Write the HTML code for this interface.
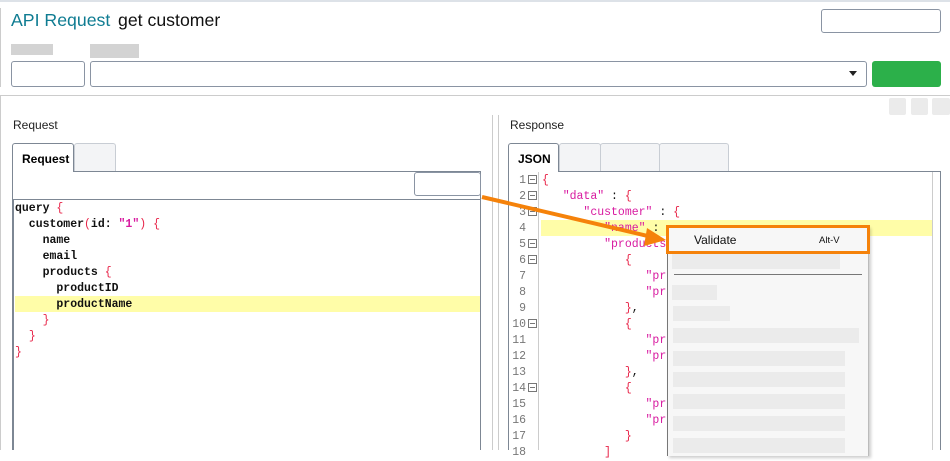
<!DOCTYPE html><html><head><style>
*{margin:0;padding:0;box-sizing:border-box}
body{width:950px;height:450px;overflow:hidden;background:#fff;font-family:"Liberation Sans",sans-serif;position:relative}
.a{position:absolute}
.code{font-family:"Liberation Mono",monospace;font-size:11.5px;font-weight:bold;line-height:16px;white-space:pre;color:#111}
.r{color:#e8264a;font-weight:normal}.p{color:#d81aa0}
.ln{font-family:"Liberation Mono",monospace;font-size:11.5px;color:#777;line-height:16px}
.fb{position:absolute;width:9px;height:9px;border:1px solid #777;left:9px}
.fb:after{content:"";position:absolute;left:1px;top:3px;width:5px;height:1px;background:#777}
.bar{position:absolute;background:#ebebeb;height:15px}
</style></head><body>
<div class="a" style="left:0;top:0;width:950px;height:2px;background:#dde2e8"></div>
<div class="a" style="left:0;top:8px;width:1px;height:79px;background:#ccc"></div>
<div class="a" style="left:11px;top:10px;font-size:17.7px;color:#0f7c92">API Request</div>
<div class="a" style="left:118px;top:10px;font-size:17.7px;color:#111">get customer</div>
<div class="a" style="left:821px;top:9px;width:120px;height:24px;border:1px solid #8a94a3;border-radius:3px"></div>
<div class="a" style="left:11px;top:44px;width:42px;height:11px;background:#d3d3d3"></div>
<div class="a" style="left:90px;top:44px;width:49px;height:14px;background:#d3d3d3"></div>
<div class="a" style="left:11px;top:61px;width:74px;height:26px;border:1px solid #8a94a3;border-radius:3px"></div>
<div class="a" style="left:90px;top:61px;width:777px;height:26px;border:1px solid #8a94a3;border-radius:3px"></div>
<div class="a" style="left:849px;top:71px;border-left:4px solid transparent;border-right:4px solid transparent;border-top:5px solid #222"></div>
<div class="a" style="left:872px;top:61px;width:69px;height:26px;background:#2cb04a;border-radius:3px"></div>
<div class="a" style="left:0;top:95px;width:950px;height:1px;background:#ccc"></div>
<div class="a" style="left:0;top:96px;width:1px;height:354px;background:#ccc"></div>
<div class="a" style="left:889px;top:98px;width:17px;height:17px;background:#ebebeb;border-radius:2px"></div>
<div class="a" style="left:911px;top:98px;width:17px;height:17px;background:#ebebeb;border-radius:2px"></div>
<div class="a" style="left:932px;top:98px;width:18px;height:17px;background:#ebebeb;border-radius:2px"></div>
<!-- left pane -->
<div class="a" style="left:13px;top:118px;font-size:12px;color:#222">Request</div>
<div class="a" style="left:12px;top:171px;width:469px;height:279px;border:1px solid #7d8794;border-bottom:none"></div>
<div class="a" style="left:12px;top:143px;width:62px;height:29px;border:1px solid #7d8794;border-bottom:none;background:#fff;border-radius:3px 3px 0 0;font-size:12px;font-weight:bold;padding:8px 0 0 9px">Request</div>
<div class="a" style="left:74px;top:143px;width:42px;height:28px;border:1px solid #c8cdd4;border-bottom:none;background:#f3f4f6;border-radius:3px 3px 0 0"></div>
<div class="a" style="left:414px;top:172px;width:67px;height:24px;border:1px solid #8a94a3;border-radius:3px"></div>
<div class="a" style="left:12px;top:199px;width:469px;height:1px;background:#7d8794"></div>
<div class="a" style="left:12px;top:200px;width:2px;height:250px;background:#7d8794"></div>
<div class="a" style="left:15px;top:296px;width:465px;height:16px;background:#fffda8"></div>
<div class="a code" style="left:15px;top:201px">query <span class="r">{</span>
  customer<span class="r">(</span>id: <span class="p">"1"</span><span class="r">)</span> <span class="r">{</span>
    name
    email
    products <span class="r">{</span>
      productID
      productName
    <span class="r">}</span>
  <span class="r">}</span>
<span class="r">}</span></div>
<div class="a" style="left:492px;top:115px;width:1px;height:335px;background:#ccc"></div>
<div class="a" style="left:498px;top:115px;width:1px;height:335px;background:#ccc"></div>
<!-- right pane -->
<div class="a" style="left:510px;top:118px;font-size:12px;color:#222">Response</div>
<div class="a" style="left:508px;top:171px;width:433px;height:279px;border:1px solid #7d8794;border-bottom:none"></div>
<div class="a" style="left:508px;top:143px;width:51px;height:29px;border:1px solid #7d8794;border-bottom:none;background:#fff;border-radius:3px 3px 0 0;font-size:12px;font-weight:bold;padding:8px 0 0 9px">JSON</div>
<div class="a" style="left:559px;top:143px;width:42px;height:28px;border:1px solid #c8cdd4;border-bottom:none;background:#f3f4f6;border-radius:3px 3px 0 0"></div>
<div class="a" style="left:600px;top:143px;width:60px;height:28px;border:1px solid #c8cdd4;border-bottom:none;background:#f3f4f6;border-radius:3px 3px 0 0"></div>
<div class="a" style="left:659px;top:143px;width:70px;height:28px;border:1px solid #c8cdd4;border-bottom:none;background:#f3f4f6;border-radius:3px 3px 0 0"></div>
<div class="a" style="left:538px;top:172px;width:1px;height:278px;background:#ccc"></div>
<div class="a" style="left:932px;top:172px;width:1px;height:278px;background:#ccc"></div>
<div class="a" style="left:541px;top:220px;width:391px;height:16px;background:#fffda8"></div>
<div class="a ln" style="left:510px;top:173px;width:16px;text-align:right">1<br>2<br>3<br>4<br>5<br>6<br>7<br>8<br>9<br>10<br>11<br>12<br>13<br>14<br>15<br>16<br>17<br>18</div>
<div class="a" style="left:519px;top:172px">
<div class="fb" style="top:3px"></div><div class="fb" style="top:19px"></div><div class="fb" style="top:35px"></div><div class="fb" style="top:67px"></div><div class="fb" style="top:83px"></div><div class="fb" style="top:147px"></div><div class="fb" style="top:211px"></div></div>
<div class="a code" style="left:542px;top:173px;font-weight:normal"><span class="r">{</span>
   <span class="p">"data"</span> : <span class="r">{</span>
      <span class="p">"customer"</span> : <span class="r">{</span>
         <span class="p">"name"</span> :
         <span class="p">"products</span>
            <span class="r">{</span>
               <span class="p">"pr</span>
               <span class="p">"pr</span>
            <span class="r">}</span>,
            <span class="r">{</span>
               <span class="p">"pr</span>
               <span class="p">"pr</span>
            <span class="r">}</span>,
            <span class="r">{</span>
               <span class="p">"pr</span>
               <span class="p">"pr</span>
            <span class="r">}</span>
         <span class="r">]</span></div>
<!-- menu -->
<div class="a" style="left:667px;top:226px;width:202px;height:230px;background:#f7f7f7;border-left:1px solid #777;border-right:1px solid #bbb;box-shadow:2px 2px 3px rgba(0,0,0,.2)"></div>
<div class="bar" style="left:672px;top:254px;width:168px"></div>
<div class="a" style="left:674px;top:274px;width:188px;height:1px;background:#777"></div>
<div class="bar" style="left:672px;top:285px;width:45px"></div>
<div class="bar" style="left:673px;top:306px;width:57px"></div>
<div class="bar" style="left:673px;top:328px;width:186px"></div>
<div class="bar" style="left:673px;top:351px;width:172px"></div>
<div class="bar" style="left:673px;top:372px;width:172px"></div>
<div class="bar" style="left:673px;top:394px;width:172px"></div>
<div class="bar" style="left:673px;top:416px;width:172px"></div>
<div class="bar" style="left:673px;top:438px;width:172px"></div>
<div class="a" style="left:666px;top:225px;width:204px;height:29px;border:3px solid #f5820a;background:#f7f7f7"></div>
<div class="a" style="left:694px;top:233px;font-size:12px;color:#111">Validate</div>
<div class="a" style="left:819px;top:235px;font-size:9.5px;color:#111">Alt-V</div>
<svg class="a" style="left:0;top:0" width="950" height="450"><line x1="482" y1="197" x2="652" y2="237" stroke="#f5820a" stroke-width="4"/><polygon points="666,240 647,228 644,246" fill="#f5820a"/></svg>
</body></html>
